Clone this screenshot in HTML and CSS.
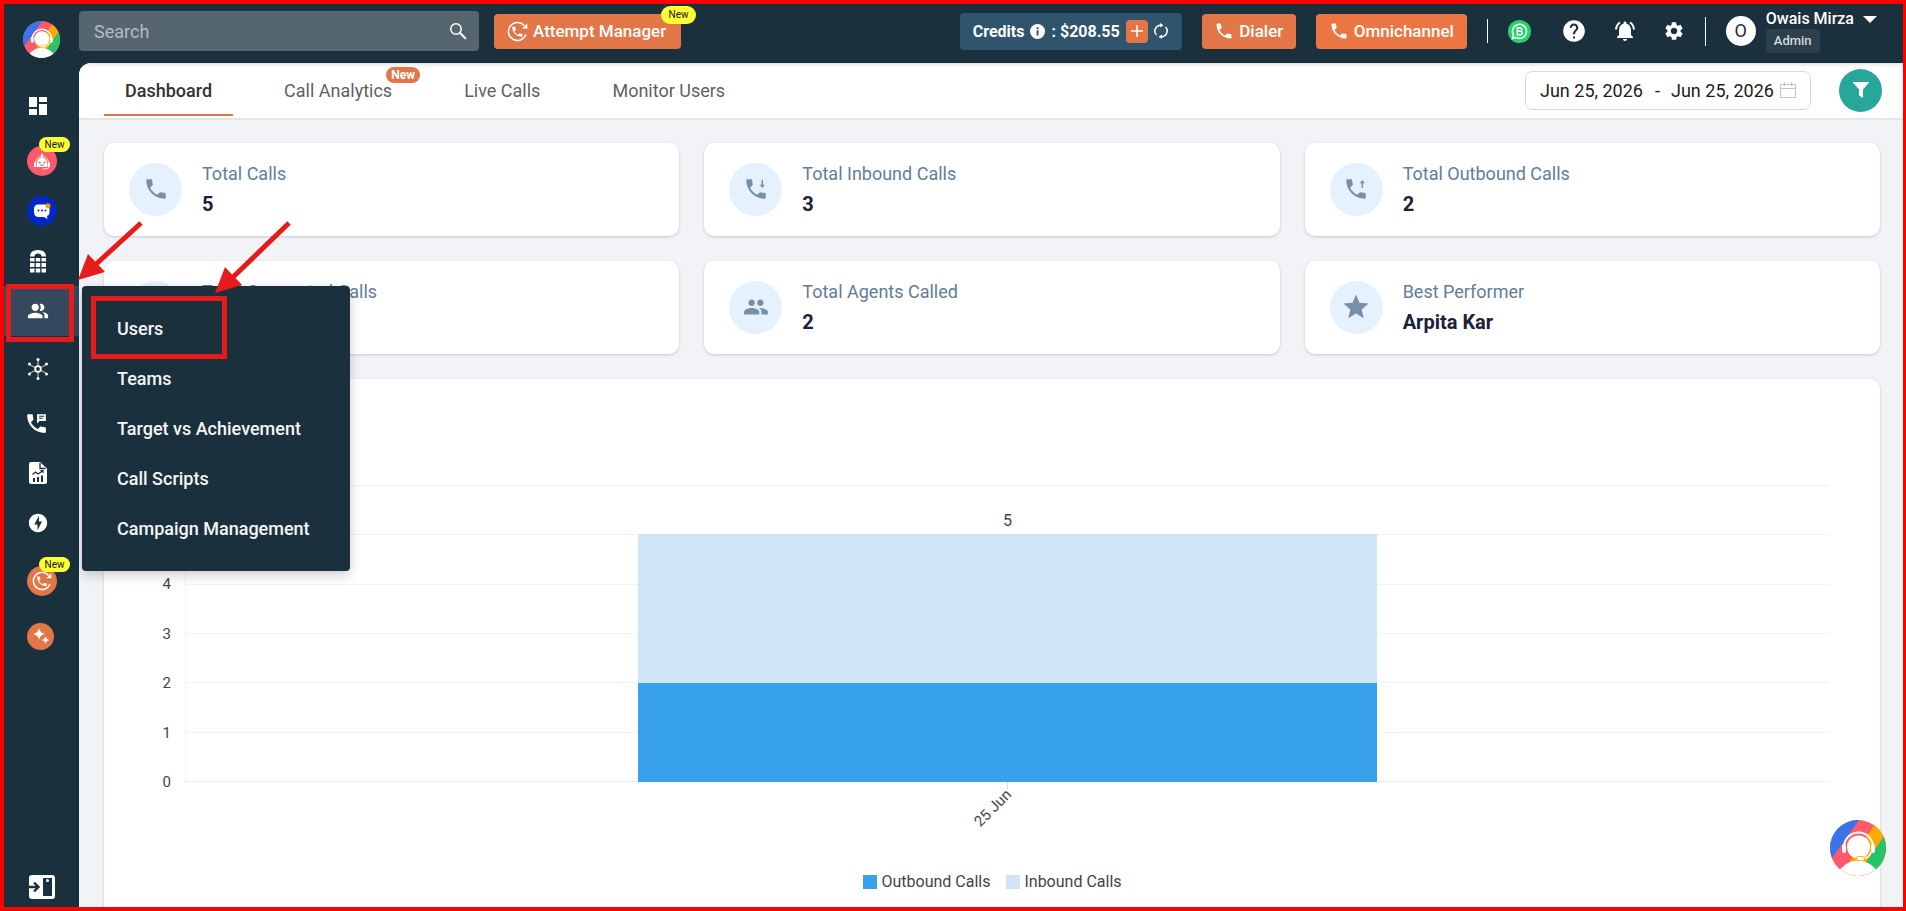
FILE: index.html
```html
<!DOCTYPE html>
<html lang="en">
<head>
<meta charset="utf-8">
<title>Dashboard</title>
<link rel="stylesheet" href="styles.css">
</head>
<body>
<svg class="defs" aria-hidden="true">
  <defs>
    <symbol id="phone" viewBox="0 0 24 24"><path d="M6.62 10.79c1.44 2.83 3.76 5.14 6.59 6.59l2.2-2.2c.27-.27.67-.36 1.02-.24 1.12.37 2.33.57 3.57.57.55 0 1 .45 1 1V20c0 .55-.45 1-1 1-9.39 0-17-7.61-17-17 0-.55.45-1 1-1h3.5c.55 0 1 .45 1 1 0 1.25.2 2.45.57 3.57.11.35.03.74-.25 1.02l-2.2 2.2z"/></symbol>
    <symbol id="redial" viewBox="0 0 24 24">
      <path d="M21.600 15.500A10.300 10.300 0 1 1 19.800 5.300" fill="none" stroke="currentColor" stroke-width="1.700"/>
      <path d="M17.300 8.600 23.400 8.800 23 2.800Z"/>
      <path transform="translate(4.200 4.700) scale(.64)" d="M6.620 10.790c1.440 2.830 3.760 5.140 6.590 6.590l2.200-2.200c.27-.27.67-.36 1.020-.24 1.120.37 2.330.57 3.570.57.55 0 1 .45 1 1V20c0 .55-.45 1-1 1-9.390 0-17-7.610-17-17 0-.55.45-1 1-1h3.500c.55 0 1 .45 1 1 0 1.250.2 2.450.57 3.570.11.350.03.740-.25 1.020l-2.200 2.200z"/>
    </symbol>
    <symbol id="logo" viewBox="0 0 56 56">
      <clipPath id="disc"><circle cx="28" cy="28" r="28"/></clipPath>
      <g clip-path="url(#disc)">
        <path fill="#ff5a6a" d="M0 0h56v56H0z"/>
        <path fill="#3b74e8" d="M-2-2H30.500L0 41z"/>
        <path fill="#ffa800" d="M46.500 2 60-2V60H7z"/>
        <path fill="#27c26c" d="M56 13 60 60H24z"/>
        <path fill="#fff" d="M9.500 50C15 44 21 40.500 28 40.500S41 44 46.500 50L50 56H6z"/>
      </g>
      <path d="M14 31V27a14.500 14.500 0 0 1 29 0v4" fill="none" stroke="#fff" stroke-width="2"/>
      <rect x="12" y="24" width="4" height="9" rx="2" fill="#fff"/>
      <rect x="41" y="24" width="4" height="9" rx="2" fill="#fff"/>
      <path d="M41 32q-1.500 6-8 6.500" fill="none" stroke="#fff" stroke-width="1.400"/>
      <circle cx="28.500" cy="27" r="11.500" fill="#fff"/>
      <rect x="26.500" y="36.500" width="8" height="4" rx="2" fill="#fff" stroke="#ffb733" stroke-width="1.200"/>
    </symbol>
  </defs>
</svg>

<div class="app">
  <aside class="sidebar">
    <a class="brand" href="#" aria-label="Home"><svg width="37" height="37"><use href="#logo"/></svg></a>
    <nav class="side-nav" aria-label="Main">
      <a class="side-link" href="#" aria-label="Dashboard">
        <svg width="18" height="18" viewBox="0 0 18 18"><path d="M0 0h8v10H0zM0 12h8v6H0zM10 0h8v5h-8zM10 7h8v11h-8z"/></svg>
      </a>
      <a class="side-link gap-s" href="#" aria-label="AI agent">
        <span class="round coral">
          <svg width="18" height="20" viewBox="0 0 18 20"><circle cx="9" cy="4" r="1.200"/><path d="M8.500 4h1v3h-1z"/><path d="M3.500 16q-.5-9 5.500-9.500 6 .5 5.500 9.500z"/><path d="M1 11.500h2V16H1zM15 11.500h2V16h-2z"/><path d="M2.300 12q1-6.500 6.700-6.500t6.700 6.500M16 16q0 2-4 2H9.500" fill="none" stroke="currentColor" stroke-width=".8"/><circle cx="6.700" cy="11.500" r="1" fill="#ff5a6a"/><circle cx="11.300" cy="11.500" r="1" fill="#ff5a6a"/><path d="M7 13.800q2 1.500 4 0" fill="none" stroke="#ff5a6a"/></svg>
        </span>
        <span class="tag tag-side">New</span>
      </a>
      <a class="side-link" href="#" aria-label="Messages">
        <span class="round blue">
          <svg width="18" height="16" viewBox="0 0 18 16"><path d="M4.500 1.500h8Q16.500 2 16.500 6.500v3Q16.500 12 14 13l.5 3-3.500-2H6Q1 14 1 9V6Q1 2 4.500 1.500z"/><circle cx="5.500" cy="7.500" r="1" fill="#0427c8"/><circle cx="9" cy="7.500" r="1" fill="#0427c8"/><circle cx="12.500" cy="7.500" r="1" fill="#0427c8"/><circle cx="15" cy="2.800" r="2.500" fill="#ff9800"/></svg>
        </span>
      </a>
      <a class="side-link" href="#" aria-label="Dial pad">
        <svg width="18" height="23" viewBox="0 0 18 23"><path d="M1 6.500Q1 0 9 0t8 6.500h-4.500Q12.500 3.500 9 3.500T5.500 6.500z"/><path d="M1 8h4.500v3.500H1zM6.800 8h4.400v3.500H6.800zM12.500 8H17v3.500h-4.500zM1 13h4.500v4H1zM6.800 13h4.400v4H6.800zM12.500 13H17v4h-4.500zM1 18.500h4.500v4H1zM6.800 18.500h4.400v4H6.800zM12.500 18.500H17v4h-4.500z"/></svg>
      </a>
      <a class="side-link active" href="#" aria-label="Users" aria-current="page">
        <svg width="22" height="22" viewBox="0 0 24 24"><path d="M16.670 13.130C18.040 14.060 19 15.320 19 17v3h4v-3c0-2.180-3.570-3.470-6.330-3.870zM15 12c2.210 0 4-1.790 4-4s-1.790-4-4-4c-.47 0-.91.1-1.330.24C14.500 5.270 15 6.580 15 8s-.5 2.730-1.330 3.760c.42.14.86.24 1.330.24zM9 12c2.210 0 4-1.790 4-4s-1.790-4-4-4-4 1.790-4 4 1.790 4 4 4zM9 14c-2.670 0-8 1.340-8 4v2h16v-2c0-2.660-5.330-4-8-4z"/></svg>
      </a>
      <a class="side-link gap-m" href="#" aria-label="Integrations">
        <svg width="22" height="22" viewBox="0 0 22 22"><circle cx="11" cy="11" r="2.800" fill="none" stroke="currentColor" stroke-width="1.800"/><path d="M11 2v6M11 14v6M2.500 6.500 8 9.500M14 12.500l5.500 3M19.500 6.500 14 9.500M8 12.500l-5.500 3" stroke="currentColor" stroke-width=".8"/><circle cx="11" cy="1.500" r="1.500"/><circle cx="11" cy="20.500" r="1.500"/><circle cx="2.500" cy="6" r="1.500"/><circle cx="19.500" cy="6" r="1.500"/><circle cx="2.500" cy="16" r="1.500"/><circle cx="19.500" cy="16" r="1.500"/></svg>
      </a>
      <a class="side-link call-link" href="#" aria-label="Call logs">
        <svg width="25" height="25" viewBox="0 0 24 24"><path d="M20 15.500c-1.250 0-2.450-.2-3.570-.57-.35-.11-.74-.03-1.020.24l-2.200 2.200c-2.830-1.440-5.150-3.750-6.590-6.580l2.200-2.210c.28-.27.36-.66.25-1.010C8.700 6.450 8.500 5.250 8.500 4c0-.55-.45-1-1-1H4c-.55 0-1 .45-1 1 0 9.390 7.610 17 17 17 .55 0 1-.45 1-1v-3.500c0-.55-.45-1-1-1zM12.500 3v9l2.500-2.500h6V3z"/><path d="M14.500 5h5M14.500 7h3.500" stroke="#1a303d"/></svg>
      </a>
      <a class="side-link" href="#" aria-label="Reports">
        <svg width="18" height="22" viewBox="0 0 18 22"><path d="M2 0h9l7 6.500V20q0 2-2 2H2q-2 0-2-2V2Q0 0 2 0z"/><path d="M11 1v5.500h5.500" fill="none" stroke="#1a303d" stroke-width="1.300"/><path d="M4 16h2v4H4zM8 15h2v5H8zM12 13.500h2V20h-2z" fill="#1a303d"/><path d="m3.500 12.500 3-2.500 2.500 2 4.500-3M11.500 8.500h2.500v2.500" fill="none" stroke="#1a303d" stroke-width="1.200"/></svg>
      </a>
      <a class="side-link" href="#" aria-label="Automation">
        <svg width="22" height="22" viewBox="0 0 24 24"><path d="M12 2.020c-5.510 0-9.980 4.470-9.980 9.980s4.470 9.980 9.980 9.980 9.980-4.470 9.980-9.980S17.510 2.020 12 2.020zM11.480 20v-6.260H8L13 4v6.260h3.350L11.480 20z"/></svg>
      </a>
      <a class="side-link gap-m" href="#" aria-label="Attempt manager">
        <span class="round orange"><svg width="20" height="20"><use href="#redial"/></svg></span>
        <span class="tag tag-side">New</span>
      </a>
      <a class="side-link gap-s" href="#" aria-label="AI assist">
        <span class="round small orange"><svg width="18" height="18" viewBox="0 0 18 18"><path d="M7 1q.8 5.200 6 6-5.200.8-6 6-.8-5.200-6-6 5.200-.8 6-6zM13.500 9q.5 3.500 4 4-3.500.5-4 4-.5-3.500-4-4 3.500-.5 4-4z"/></svg></span>
      </a>
    </nav>
    <button class="expand" type="button" aria-label="Expand sidebar">
      <svg width="26" height="24" viewBox="0 0 26 24"><rect width="26" height="24" rx="3"/><path d="M14 3h9v18h-9z" fill="#1a303d"/><circle cx="18.500" cy="5.500" r="1.500"/><path d="M0 12h9M5 7.500 9.500 12 5 16.500" fill="none" stroke="#1a303d" stroke-width="2.400"/></svg>
    </button>
  </aside>

  <div class="page">
    <header class="topbar">
      <form class="search" role="search">
        <input class="search-input" type="search" placeholder="Search" aria-label="Search">
        <button class="search-go" type="button" aria-label="Search"><svg width="22" height="22" viewBox="0 0 22 22"><circle cx="9" cy="9" r="5.200" fill="none" stroke="currentColor" stroke-width="1.500"/><path d="m12.800 12.800 6 6" stroke="currentColor" stroke-width="2"/></svg></button>
      </form>
      <button class="btn attempt" type="button"><svg width="21" height="21"><use href="#redial"/></svg>Attempt Manager<span class="tag tag-top">New</span></button>

      <div class="topbar-right">
        <div class="credits">
          <span>Credits</span>
          <svg width="15" height="15" viewBox="0 0 15 15"><circle cx="7.500" cy="7.500" r="7.500"/><path d="M6.600 6.300h1.900v5.200H6.600zM6.600 3.300h1.900v1.900H6.600z" fill="#2f546b"/></svg>
          <span>: $208.55</span>
          <button class="plus" type="button" aria-label="Add credits"><svg width="12" height="12" viewBox="0 0 12 12"><path d="M6 0v12M0 6h12" stroke="currentColor" stroke-width="1.600"/></svg></button>
          <button class="bare" type="button" aria-label="Refresh credits"><svg width="14" height="16" viewBox="0 0 14 16"><path d="M2.500 12A5.800 5.800 0 0 1 7 2.200M11.500 4A5.800 5.800 0 0 1 7 13.800" fill="none" stroke="currentColor" stroke-width="1.500"/><path d="M6 0l3.500 2.200L6 4.600zM8 16l-3.500-2.200L8 11.400z"/></svg></button>
        </div>
        <button class="btn dialer" type="button"><svg width="20" height="20"><use href="#phone"/></svg>Dialer</button>
        <button class="btn omni" type="button"><svg width="20" height="20"><use href="#phone"/></svg>Omnichannel</button>
        <span class="rule"></span>
        <button class="bare wa" type="button" aria-label="WhatsApp"><svg width="23" height="23" viewBox="0 0 23 23"><circle cx="11.500" cy="11.500" r="11.500" fill="#25d366"/><path d="m4.500 18.500 1-3.600a7 7 0 1 1 2.700 2.600z" fill="none" stroke="currentColor" stroke-width="1.600"/><path d="M9.300 8h2.900q1.700 0 1.700 1.600 0 1.100-1 1.500 1.300.4 1.300 1.800 0 1.800-2 1.800H9.300zM9.300 11.200h3" fill="none" stroke="currentColor" stroke-width="1.400"/></svg></button>
        <button class="bare help" type="button" aria-label="Help"><svg width="26" height="26" viewBox="0 0 24 24"><path d="M12 2C6.480 2 2 6.480 2 12s4.480 10 10 10 10-4.480 10-10S17.520 2 12 2zm1 17h-2v-2h2v2zm2.070-7.750l-.9.920C13.450 12.900 13 13.500 13 15h-2v-.5c0-1.100.45-2.100 1.170-2.830l1.240-1.260c.37-.36.59-.86.59-1.410 0-1.100-.9-2-2-2s-2 .9-2 2H8c0-2.210 1.790-4 4-4s4 1.790 4 4c0 .88-.36 1.680-.93 2.250z"/></svg></button>
        <button class="bare bell" type="button" aria-label="Notifications"><svg width="24" height="24" viewBox="0 0 24 24"><path d="M7.580 4.080L6.150 2.650C3.750 4.480 2.170 7.300 2.030 10.500h2c.15-2.650 1.510-4.970 3.550-6.420zm12.390 6.420h2c-.15-3.200-1.730-6.020-4.120-7.850l-1.420 1.430c2.020 1.450 3.390 3.770 3.540 6.420zM18 11c0-3.070-1.640-5.640-4.500-6.320V4c0-.83-.67-1.500-1.500-1.500s-1.500.67-1.500 1.500v.68C7.630 5.360 6 7.920 6 11v5l-2 2v1h16v-1l-2-2v-5zm-6 11c.14 0 .27-.01.4-.04.65-.14 1.180-.58 1.440-1.180.1-.24.15-.5.15-.78h-4c.01 1.100.9 2 2.010 2z"/></svg></button>
        <button class="bare gear" type="button" aria-label="Settings"><svg width="22" height="22" viewBox="0 0 24 24"><path d="M19.140 12.940c.04-.3.06-.61.06-.94 0-.32-.02-.64-.07-.94l2.030-1.580c.18-.14.23-.41.12-.61l-1.920-3.320c-.12-.22-.37-.29-.59-.22l-2.390.96c-.5-.38-1.030-.7-1.620-.94l-.36-2.540c-.04-.24-.24-.41-.48-.41h-3.840c-.24 0-.43.17-.47.41l-.36 2.540c-.59.24-1.130.57-1.620.94l-2.390-.96c-.22-.08-.47 0-.59.22L2.740 8.870c-.12.21-.08.47.12.61l2.030 1.580c-.05.3-.09.63-.09.94s.02.64.07.94l-2.030 1.580c-.18.14-.23.41-.12.61l1.920 3.320c.12.22.37.29.59.22l2.390-.96c.5.38 1.030.7 1.620.94l.36 2.540c.05.24.24.41.48.41h3.840c.24 0 .44-.17.47-.41l.36-2.540c.59-.24 1.130-.56 1.620-.94l2.390.96c.22.08.47 0 .59-.22l1.920-3.320c.12-.22.07-.47-.12-.61l-2.010-1.580zM12 15.600c-1.980 0-3.600-1.620-3.600-3.600s1.620-3.600 3.600-3.600 3.600 1.620 3.600 3.600-1.620 3.600-3.600 3.600z"/></svg></button>
        <span class="rule tall"></span>
        <button class="account" type="button">
          <span class="avatar">O</span>
          <span class="who"><span class="name">Owais Mirza<svg width="14" height="7" viewBox="0 0 14 7"><path d="M0 0h14L7 7z"/></svg></span><span class="role">Admin</span></span>
        </button>
      </div>
    </header>

    <div class="content">
      <div class="subbar">
        <nav class="tabs" aria-label="Dashboard sections">
          <a class="tab current" href="#">Dashboard</a>
          <a class="tab" href="#">Call Analytics<span class="tab-tag">New</span></a>
          <a class="tab" href="#">Live Calls</a>
          <a class="tab" href="#">Monitor Users</a>
        </nav>
        <div class="filters">
          <div class="range">
            <input class="date" type="text" value="Jun 25, 2026" aria-label="Start date">
            <span class="dash">-</span>
            <input class="date" type="text" value="Jun 25, 2026" aria-label="End date">
            <svg width="16" height="16" viewBox="0 0 16 16"><path d="M.5 2.500h15v13H.5zM.5 6.500h15M4.500 0v4M11.500 0v4" fill="none" stroke="#c4c4c4" stroke-width="1.200"/></svg>
          </div>
          <button class="funnel" type="button" aria-label="Filter"><svg width="18" height="18" viewBox="0 0 18 18"><path d="M.5 1h17L11 8.500V17l-4-2.500v-6z"/></svg></button>
        </div>
      </div>

      <main class="main">
        <section class="stats">
          <article class="stat"><span class="stat-icon"><svg width="26" height="26"><use href="#phone"/></svg></span><div><h2 class="stat-title">Total Calls</h2><p class="stat-value">5</p></div></article>
          <article class="stat"><span class="stat-icon"><svg width="26" height="26" viewBox="0 0 24 24"><use href="#phone" width="24" height="24"/><path d="M17.800 3.500v5" stroke="currentColor" stroke-width="1.400"/><path d="M15.300 8h5l-2.500 3z"/></svg></span><div><h2 class="stat-title">Total Inbound Calls</h2><p class="stat-value">3</p></div></article>
          <article class="stat"><span class="stat-icon"><svg width="26" height="26" viewBox="0 0 24 24"><use href="#phone" width="24" height="24"/><path d="M17.800 6v5" stroke="currentColor" stroke-width="1.400"/><path d="M15.300 6.800h5l-2.500-3z"/></svg></span><div><h2 class="stat-title">Total Outbound Calls</h2><p class="stat-value">2</p></div></article>
          <article class="stat"><span class="stat-icon"><svg width="26" height="26"><use href="#phone"/></svg></span><div><h2 class="stat-title">Total Connected Calls</h2><p class="stat-value">0</p></div></article>
          <article class="stat"><span class="stat-icon"><svg width="26" height="26" viewBox="0 0 24 24"><path d="M16 11c1.660 0 2.990-1.340 2.990-3S17.660 5 16 5c-1.660 0-3 1.340-3 3s1.340 3 3 3zm-8 0c1.660 0 2.990-1.340 2.990-3S9.660 5 8 5C6.340 5 5 6.340 5 8s1.340 3 3 3zm0 2c-2.330 0-7 1.170-7 3.500V19h14v-2.500c0-2.330-4.670-3.500-7-3.500zm8 0c-.29 0-.62.02-.97.05 1.160.84 1.970 1.970 1.970 3.450V19h6v-2.500c0-2.330-4.670-3.500-7-3.500z"/></svg></span><div><h2 class="stat-title">Total Agents Called</h2><p class="stat-value">2</p></div></article>
          <article class="stat"><span class="stat-icon"><svg width="30" height="30" viewBox="0 0 24 24"><path d="M12 17.270L18.180 21l-1.640-7.030L22 9.240l-7.190-.61L12 2 9.190 8.630 2 9.240l5.460 4.730L5.820 21z"/></svg></span><div><h2 class="stat-title">Best Performer</h2><p class="stat-value">Arpita Kar</p></div></article>
        </section>

        <section class="chart" aria-label="Calls per day">
          <div class="y-axis"><span>4</span><span>3</span><span>2</span><span>1</span><span>0</span></div>
          <div class="plot">
            <div class="bands"><i></i><i></i><i></i><i></i><i></i><i></i></div>
            <div class="bar">
              <span class="bar-total">5</span>
              <div class="seg inbound" style="flex-grow:3"></div>
              <div class="seg outbound" style="flex-grow:2"></div>
            </div>
          </div>
          <div class="x-axis"><span class="x-label">25 Jun</span></div>
          <div class="legend">
            <span class="key"><i class="swatch outbound"></i>Outbound Calls</span>
            <span class="key"><i class="swatch inbound"></i>Inbound Calls</span>
          </div>
        </section>
      </main>
    </div>
  </div>

  <nav class="flyout" aria-label="Users menu">
    <a href="#">Users</a>
    <a href="#">Teams</a>
    <a href="#">Target vs Achievement</a>
    <a href="#">Call Scripts</a>
    <a href="#">Campaign Management</a>
  </nav>

  <button class="helper" type="button" aria-label="Support chat"><svg width="56" height="56"><use href="#logo"/></svg></button>

  <svg class="marks" width="300" height="380" viewBox="0 0 300 380" aria-hidden="true">
    <g fill="none" stroke="#e71b1b" stroke-width="5">
      <rect x="8.500" y="286.500" width="63" height="53"/>
      <rect x="93.500" y="298.500" width="131" height="58"/>
      <path d="M141 223 94 266M289 223l-60 58"/>
    </g>
    <path fill="#e71b1b" d="m78 280 10-26 17 18zM215 293l10-26 17 18z"/>
  </svg>
</div>
</body>
</html>
```
FILE: styles.css
```css
* { box-sizing: border-box; }

body {
  margin: 0;
  font-family: Roboto, "Liberation Sans", sans-serif;
  font-size: 18px;
  color: #333;
}

h2, p { margin: 0; }
a { color: inherit; text-decoration: none; }
svg { display: block; flex: none; fill: currentColor; }
button, input { font: inherit; color: inherit; border: 0; padding: 0; background: none; }
.defs { position: absolute; width: 0; height: 0; }

.app {
  position: relative;
  display: flex;
  height: 100vh;
  overflow: hidden;
  border: solid #f00;
  border-width: 4px 3px 4px 4px;
  background: #1a303d;
}

/* Sidebar */
.sidebar {
  flex: none;
  width: 75px;
  display: flex;
  flex-direction: column;
  color: #fff;
}
.brand { display: flex; justify-content: center; padding: 17px 0 23px; }
.side-nav { flex: 1; }
.side-link {
  position: relative;
  display: flex;
  align-items: center;
  justify-content: center;
  height: 50px;
  padding-right: 7px;
}
.side-link.active { background: #34495e; }
.call-link { margin-top: 4px; padding-right: 10px; }
.gap-s { margin-top: 5px; }
.gap-m { margin-top: 8px; }
.round {
  display: flex;
  align-items: center;
  justify-content: center;
  width: 30px;
  height: 30px;
  margin-left: 8px;
  border-radius: 50%;
}
.round.small { width: 27px; height: 27px; margin-left: 5px; }
.coral { background: #ff5a6a; }
.blue { background: #0427c8; }
.orange { background: #e27647; }
.tag {
  position: absolute;
  background: #ffff33;
  color: #111;
  font-weight: 400;
  text-align: center;
  border-radius: 10px;
}
.tag-side { top: 1px; right: 9px; width: 31px; font-size: 10px; line-height: 15px; }
.tag-top { top: -8px; right: -15px; width: 35px; font-size: 10px; line-height: 18px; }
.expand { align-self: center; margin-bottom: 8px; cursor: pointer; }

/* Top bar */
.page { flex: 1; min-width: 0; display: flex; flex-direction: column; }
.topbar {
  flex: none;
  display: flex;
  align-items: center;
  height: 59px;
  padding: 0 26px 5px 0;
  color: #fff;
}
.search {
  display: flex;
  align-items: center;
  width: 400px;
  height: 40px;
  padding: 0 10px 0 15px;
  background: #55666f;
  border-radius: 4px;
}
.search-input { flex: 1; min-width: 0; outline: 0; }
.search-input::placeholder { color: #b5bcc0; opacity: 1; }
.btn {
  position: relative;
  display: flex;
  align-items: center;
  height: 35px;
  border-radius: 4px;
  background: #e27647;
  font-size: 17px;
  font-weight: 500;
  white-space: nowrap;
}
.attempt { width: 187px; margin-left: 15px; padding-left: 13px; gap: 5px; }
.dialer { width: 94px; margin-left: 20px; justify-content: center; gap: 5px; }
.omni { width: 151px; margin-left: 20px; justify-content: center; gap: 5px; background: #eb7644; }
.topbar-right { display: flex; align-items: center; margin-left: auto; }
.credits {
  display: flex;
  align-items: center;
  gap: 6px;
  width: 222px;
  height: 37px;
  padding-left: 13px;
  background: #2f546b;
  border-radius: 4px;
  font-size: 16px;
  font-weight: 700;
}
.plus {
  display: flex;
  align-items: center;
  justify-content: center;
  width: 22px;
  height: 23px;
  border-radius: 4px;
  background: #e27647;
}
.rule { width: 1px; height: 24px; margin-left: 20px; background: #fff; }
.rule.tall { height: 29px; margin-left: 20px; }
.wa { margin-left: 20px; }
.help { margin-left: 30px; }
.bell { margin-left: 26px; }
.gear { margin-left: 26px; }
.account { display: flex; align-items: center; gap: 10px; margin-left: 20px; text-align: left; }
.avatar {
  width: 30px;
  border-radius: 50%;
  background: #fff;
  color: #1a303d;
  line-height: 30px;
  text-align: center;
}
.who { display: flex; flex-direction: column; align-items: flex-start; }
.name { display: flex; align-items: center; gap: 9px; font-size: 16px; font-weight: 500; line-height: 20px; }
.role {
  padding: 0 8px;
  border-radius: 4px;
  background: #2b404c;
  color: #d5dadd;
  font-size: 13px;
  font-weight: 500;
  line-height: 24px;
}

/* Content */
.content {
  flex: 1;
  min-height: 0;
  display: flex;
  flex-direction: column;
  overflow: hidden;
  background: #f1f3f7;
  border-top-left-radius: 12px;
}
.subbar {
  flex: none;
  display: flex;
  justify-content: space-between;
  height: 57px;
  padding: 0 21px 0 25px;
  background: #fff;
  border-bottom: 2px solid #e4e6e6;
  box-shadow: inset 0 4px 4px -3px rgba(0, 0, 0, .16);
}
.tabs { display: flex; gap: 30px; }
.tab {
  position: relative;
  display: flex;
  align-items: center;
  height: 53px;
  padding: 4px 21px 0;
  border-bottom: 2px solid transparent;
  color: #5f5f5f;
  white-space: nowrap;
}
.tab.current { color: #333; font-weight: 500; border-color: #e27647; }
.tab-tag {
  position: absolute;
  top: 4px;
  right: -7px;
  width: 34px;
  border-radius: 8px;
  background: #e27647;
  color: #fff;
  font-size: 12px;
  font-weight: 700;
  line-height: 16px;
  text-align: center;
}
.filters { display: flex; align-items: center; gap: 28px; padding-bottom: 1px; }
.range {
  display: flex;
  align-items: center;
  width: 286px;
  height: 39px;
  padding: 0 14px;
  border: 1px solid #d9d9d9;
  border-radius: 7px;
  color: #1c1c1c;
}
.date { width: 104px; }
.dash { flex: 1; text-align: center; }
.range svg { margin-left: 5px; }
.funnel {
  display: flex;
  align-items: center;
  justify-content: center;
  width: 43px;
  height: 43px;
  border-radius: 50%;
  background: #27a69a;
  color: #fff;
}

.main { flex: 1; min-height: 0; overflow: hidden; padding: 23px 23px 0 25px; }
.stats { display: grid; grid-template-columns: repeat(3, 1fr); gap: 25px; }
.stat {
  display: flex;
  align-items: center;
  gap: 20px;
  padding: 16px 25px 17px;
  border-radius: 10px;
  background: #fff;
  box-shadow: 0 1px 3px rgba(0, 0, 0, .18);
}
.stat-icon {
  display: flex;
  align-items: center;
  justify-content: center;
  width: 53px;
  height: 53px;
  border-radius: 50%;
  background: #e5f1fe;
  color: #7790a8;
}
.stat-title { font-size: 18px; font-weight: 400; line-height: 30px; color: #627d98; }
.stat-value { font-size: 20px; font-weight: 700; line-height: 30px; color: #1a2138; }

/* Chart */
.chart {
  display: grid;
  grid-template-columns: 81px 1fr;
  margin-top: 25px;
  padding: 106px 51px 40px 0;
  border-radius: 10px;
  background: #fff;
  box-shadow: 0 1px 3px rgba(0, 0, 0, .18);
  color: #444;
  font-size: 16px;
}
.y-axis {
  display: flex;
  flex-direction: column;
  justify-content: space-between;
  align-self: end;
  height: 218px;
  margin-bottom: -10px;
  padding-right: 14px;
  text-align: right;
  font-size: 15px;
  line-height: 20px;
}
.plot {
  position: relative;
  display: flex;
  justify-content: center;
  align-items: flex-end;
  height: 297px;
  border-left: 1px solid #f1f1f1;
}
.bands { position: absolute; inset: 0; display: flex; flex-direction: column; border-bottom: 1px solid #eee; }
.bands i { flex: 1; border-top: 1px solid #f3f3f3; }
.bar { position: relative; display: flex; flex-direction: column; width: 45%; height: 248px; }
.bar-total { position: absolute; bottom: 100%; width: 100%; line-height: 26px; text-align: center; }
.seg { flex-basis: 0; }
.inbound { background: #cfe5f7; }
.outbound { background: #37a2eb; }
.x-axis { grid-column: 2; height: 84px; display: flex; flex-direction: column; align-items: center; }
.x-axis::before { content: ""; width: 1px; height: 7px; background: #ddd; }
.x-label { margin: 10px 28px 0 0; font-size: 15px; line-height: 18px; transform: rotate(-45deg); }
.legend { grid-column: 1 / -1; display: flex; justify-content: center; gap: 16px; padding: 6px 0 0 52px; }
.key { display: flex; align-items: center; gap: 4px; line-height: 20px; }
.swatch { width: 14px; height: 14px; }

/* Layers over the page */
.flyout {
  position: absolute;
  top: 282px;
  left: 78px;
  min-width: 268px;
  padding: 18px 0 17px;
  border-radius: 4px;
  background: #1a303d;
  box-shadow: 0 4px 12px rgba(0, 0, 0, .2);
  color: #f4f6f7;
  font-weight: 500;
}
.flyout a { display: block; padding: 0 35px; line-height: 50px; }
.helper { position: absolute; right: 17px; bottom: 31px; }
.marks { position: absolute; top: -4px; left: -4px; pointer-events: none; }
```
